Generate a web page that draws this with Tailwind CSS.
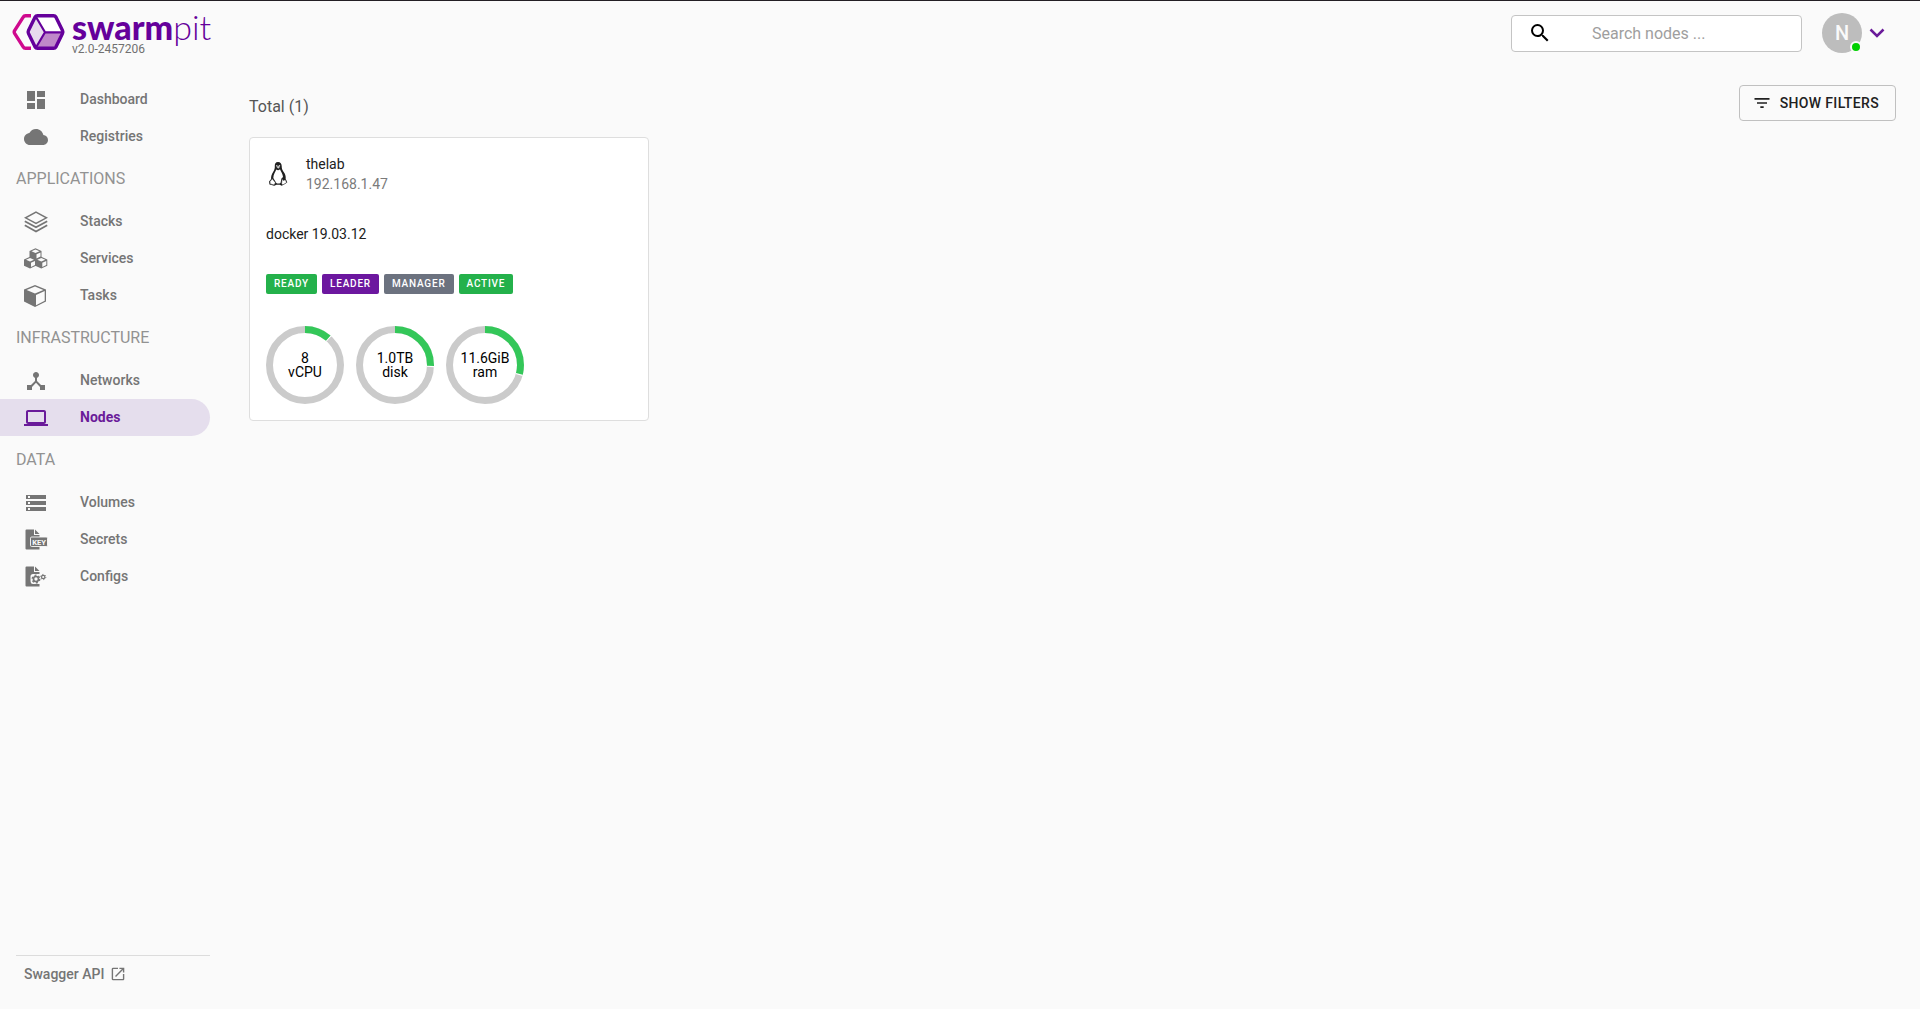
<!DOCTYPE html>
<html lang="en">
<head>
    <meta charset="UTF-8">
    <meta name="viewport" content="width=device-width, initial-scale=1.0">
    <title>Swarmpit - Nodes</title>
    <script src="https://cdn.jsdelivr.net/npm/@tailwindcss/browser@4"></script>
</head>
<body class="min-h-screen flex flex-col bg-[#fafafa] border-t border-[#231f24] font-['Roboto',sans-serif] text-sm text-[#212121]">
    <!-- Top bar -->
    <header class="flex items-center justify-between h-16 pl-3 pr-[35px]">
        <a href="#" class="flex items-start gap-1.5 text-[#65009b]">
            <svg class="w-[54px] h-[38px] mt-1" viewBox="12 13 54 38" fill="none" stroke-linejoin="round">
                <path d="M31 15.7h-5.5q-1.5 0-2.3 1.4L14.6 30.6q-.8 1.4 0 2.8l8.6 13.5q.8 1.4 2.3 1.4H31" stroke="#cf0a8e" stroke-width="3.4"/>
                <path d="M36.500 16.500L45 32 36.500 47.500 28.500 32z" fill="#e8dced"/>
                <path d="M45 32h18L54.500 48h-18z" fill="#bf88c9"/>
                <path d="M36.500 16h18L63 32H45z" fill="#fff"/>
                <path d="M36 17l9 15.300L36 47.500M45 32.300h18" stroke="#65009b" stroke-width="2.200"/>
                <path d="M37.500 15.800h16q1.700 0 2.500 1.400l6.500 13.200q.8 1.600 0 3.200l-6.500 13.200q-.8 1.400-2.500 1.400h-16q-1.700 0-2.500-1.400l-6.500-13.200q-.8-1.600 0-3.200l6.500-13.200q.8-1.400 2.500-1.400z" stroke="#65009b" stroke-width="3.400"/>
            </svg>
            <span class="flex flex-col">
                <span class="font-['Lato',sans-serif] text-[34px] leading-9"><b class="font-black">swarm</b><span class="font-light">pit</span></span>
                <span class="-mt-1 text-xs leading-4 text-[#707070]">v2.0-2457206</span>
            </span>
        </a>
        <div class="flex items-center">
            <label class="flex items-center w-[291px] h-[37px] px-4 bg-white border border-[#c4c4c4] rounded">
                <svg class="w-6 h-6 shrink-0" viewBox="0 0 24 24" fill="#000"><path d="M15.500 14h-.79l-.28-.27A6.471 6.471 0 0016 9.500 6.500 6.500 0 109.500 16c1.610 0 3.090-.59 4.230-1.570l.27.28v.79l5 4.990L20.490 19l-4.990-5zm-6 0C7.010 14 5 11.990 5 9.500S7.010 5 9.500 5 14 7.010 14 9.500 11.990 14 9.500 14z"/></svg>
                <input type="text" placeholder="Search nodes ..." aria-label="Search nodes" class="min-w-0 flex-1 ml-10 pt-0.5 text-base outline-none placeholder:text-[#9e9e9e]">
            </label>
            <button class="flex items-center ml-5" aria-label="Account menu">
                <span class="relative flex items-center justify-center w-10 h-10 rounded-full bg-[#bdbdbd] text-xl font-medium text-[#fafafa]">N
                    <span class="absolute right-0 bottom-0 w-3 h-3 rounded-full border-2 border-[#fafafa] bg-[#00d000]"></span>
                </span>
                <svg class="w-4 h-4 ml-[7px]" viewBox="0 0 16 16" fill="none" stroke="#6a1b9a" stroke-width="2.500"><path d="M1.500 4.500L8 11l6.500-6.500"/></svg>
            </button>
        </div>
    </header>

    <div class="flex flex-1">
        <!-- Sidebar -->
        <aside class="flex flex-col w-[210px] shrink-0 pt-4 font-medium text-[#757575]">
            <nav>
                <a href="#" class="flex items-center h-[37px] pl-6 gap-8"><svg class="w-6 h-6" viewBox="0 0 24 24" fill="currentColor"><path d="M3 13h8V3H3v10zm0 8h8v-6H3v6zm10 0h8V11h-8v10zm0-18v6h8V3h-8z"/></svg><span class="pb-0.5">Dashboard</span></a>
                <a href="#" class="flex items-center h-[37px] pl-6 gap-8"><svg class="w-6 h-6" viewBox="0 0 24 24" fill="currentColor"><path d="M19.350 10.040C18.670 6.590 15.640 4 12 4 9.110 4 6.600 5.640 5.350 8.040 2.340 8.360 0 10.910 0 14c0 3.310 2.690 6 6 6h13c2.760 0 5-2.240 5-5 0-2.640-2.050-4.780-4.650-4.960z"/></svg><span class="pb-0.5">Registries</span></a>

                <h2 class="h-12 pl-4 text-base leading-[48px] font-normal text-[#929292]">APPLICATIONS</h2>
                <a href="#" class="flex items-center h-[37px] pl-6 gap-8">
                    <svg class="w-6 h-6" viewBox="0 0 24 24" fill="none" stroke="currentColor" stroke-width="1.500">
                        <path d="M12 2.200L22.500 7.800 12 13.300 1.500 7.800z"/>
                        <path d="M.8 11.300L12 17.300l11.200-6M.8 15.300L12 21.500l11.200-6.200" stroke-width="1.800"/>
                    </svg><span class="pb-0.5">Stacks</span></a>
                <a href="#" class="flex items-center h-[37px] pl-6 gap-8">
                    <svg class="w-6 h-6" viewBox="0 0 24 24" fill="currentColor">
                        <defs>
                            <g id="cube">
                                <path d="M0 3L6 .2 12 3v6.200L6 12 0 9.200z"/>
                                <path d="M2 3.300L6 1.500l4 1.800-4 1.700zM7 6.300l4-1.700v4L7 10.500z" fill="#fafafa"/>
                            </g>
                        </defs>
                        <use href="#cube" x="5.500" y="1"/>
                        <use href="#cube" x="0" y="9.500"/>
                        <use href="#cube" x="11.300" y="9.500"/>
                    </svg><span class="pb-0.5">Services</span></a>
                <a href="#" class="flex items-center h-[37px] pl-6 gap-8">
                    <svg class="w-6 h-6" viewBox="0 0 24 24" fill="currentColor">
                        <path d="M0 5.500L11 1l11 4.500v12L11 23 0 17.500z"/>
                        <path d="M2.600 5.900L11 2.500l8.400 3.400-8.400 3.600zM12 11l8.700-3.900v9.700L12 21.200z" fill="#fafafa"/>
                    </svg><span class="pb-0.5">Tasks</span></a>

                <h2 class="h-12 pl-4 text-base leading-[48px] font-normal text-[#929292]">INFRASTRUCTURE</h2>
                <a href="#" class="flex items-center h-[37px] pl-6 gap-8"><svg class="w-6 h-6" viewBox="0 0 24 24" fill="currentColor"><path d="M17 16l-4-4V8.820C14.160 8.400 15 7.300 15 6c0-1.660-1.340-3-3-3S9 4.340 9 6c0 1.300.84 2.400 2 2.820V12l-4 4H3v5h5v-3.050l4-4.200 4 4.200V21h5v-5h-4z"/></svg><span class="pb-0.5">Networks</span></a>
                <a href="#" aria-current="page" class="flex items-center h-[37px] pl-6 gap-8 rounded-r-full bg-[#e5deed] font-bold text-[#6a1b9a]"><svg class="w-6 h-6" viewBox="0 0 24 24" fill="currentColor"><path d="M20 18c1.100 0 1.990-.9 1.990-2L22 6c0-1.100-.9-2-2-2H4c-1.100 0-2 .9-2 2v10c0 1.100.9 2 2 2H0v2h24v-2h-4zM4 6h16v10H4V6z"/></svg><span class="pb-0.5">Nodes</span></a>

                <h2 class="h-12 pl-4 text-base leading-[48px] font-normal text-[#929292]">DATA</h2>
                <a href="#" class="flex items-center h-[37px] pl-6 gap-8"><svg class="w-6 h-6" viewBox="0 0 24 24" fill="currentColor"><path d="M2 20h20v-4H2v4zm2-3h2v2H4v-2zM2 4v4h20V4H2zm4 3H4V5h2v2zm-4 7h20v-4H2v4zm2-3h2v2H4v-2z"/></svg><span class="pb-0.5">Volumes</span></a>
                <a href="#" class="flex items-center h-[37px] pl-6 gap-8">
                    <svg class="w-6 h-6" viewBox="0 0 24 24" fill="currentColor">
                        <path d="M2.500 1.500H10V7h5.500v14.500h-13q-1 0-1-1v-18q0-1 1-1z"/>
                        <path d="M11 1.500L15.500 6H11z"/>
                        <rect x="6.500" y="9" width="17" height="9.500" rx="1.200" stroke="#fafafa" stroke-width=".9"/>
                        <text x="15" y="16.500" text-anchor="middle" font-family="Roboto, sans-serif" font-size="7.500" font-weight="700" fill="#fafafa">KEY</text>
                    </svg><span class="pb-0.5">Secrets</span></a>
                <a href="#" class="flex items-center h-[37px] pl-6 gap-8">
                    <svg class="w-6 h-6" viewBox="0 0 24 24" fill="currentColor">
                        <path d="M2.500 1.500H10V7h5.500v2H9q-2.500 0-2.500 2.500v4Q6.500 19 9 19h6.500v2.500h-13q-1 0-1-1v-18q0-1 1-1z"/>
                        <path d="M11 1.500L15.500 6H11z"/>
                        <circle cx="12" cy="14" r="2.500" fill="none" stroke="currentColor" stroke-width="1.700"/>
                        <circle cx="12" cy="14" r="3.800" fill="none" stroke="currentColor" stroke-width="1.300" stroke-dasharray="2 1.980"/>
                        <circle cx="19.200" cy="12" r="1.700" fill="none" stroke="currentColor" stroke-width="1.200"/>
                        <circle cx="19.200" cy="12" r="2.600" fill="none" stroke="currentColor" stroke-width=".9" stroke-dasharray="1.300 1.420"/>
                    </svg><span class="pb-0.5">Configs</span></a>
            </nav>
            <div class="mt-auto ml-4 h-[54px] pt-2 pl-2 border-t border-[#dcdcdc]">
                <a href="#" class="inline-flex items-center gap-[7px]">Swagger API
                    <svg class="w-3.5 h-3.5" viewBox="2 2 20 20" fill="currentColor"><path d="M19 19H5V5h7V3H5a2 2 0 00-2 2v14a2 2 0 002 2h14c1.100 0 2-.9 2-2v-7h-2v7zM14 3v2h3.590l-9.830 9.830 1.410 1.410L19 6.410V10h2V3h-7z"/></svg>
                </a>
            </div>
        </aside>

        <!-- Nodes -->
        <main class="flex-1 pt-5 pl-[39px] pr-6">
            <div class="flex items-start justify-between">
                <h1 class="pt-2 text-base leading-7 text-[#555]">Total (1)</h1>
                <button class="flex items-center gap-2 h-9 pl-3 pr-4 border border-[#c0c0c0] rounded font-medium tracking-wide">
                    <svg class="w-5 h-5" viewBox="0 0 24 24" fill="currentColor"><path d="M10 18h4v-2h-4v2zM3 6v2h18V6H3zm3 7h12v-2H6v2z"/></svg>
                    SHOW FILTERS
                </button>
            </div>

            <article class="w-full max-w-[400px] mt-4 p-4 bg-white border border-[#dedede] rounded">
                <div class="flex items-center gap-4 h-10">
                    <svg class="w-6 h-6" viewBox="0 0 24 24">
                        <path d="M12 0c-2.500 0-3.300 1.900-3.200 4 .1 2.500-.3 3.700-1.700 6-1.500 2.300-2.200 4.500-2 7l-2 2.500.4 3 4.800 1.300 2.200-1h3.200l2 1 3-1.800 2.600-1.700-1.600-3.300c.3-3-.6-5.200-2.200-7.300-1.400-2-1.800-3.300-1.800-5.700C15.700 1.700 14.500 0 12 0z" fill="#202020"/>
                        <path d="M10.300 7.500c-.8 2.300-3 5-3 8.500l3 5q2 1.200 4.200 0l1-4.500 1.500-1.500c-.2-3-2.200-5.400-3-7.700q-1.800 1.700-3.700.2z" fill="#fff"/>
                        <path d="M4 19.500l2.300-2.700 3.200 4-1.500 2.100-3.800-1zM16.200 16.700l1 1.700 2.200-.6 1.200 2.800-3.800 2.300-1.200-1.400z" fill="#fff" stroke="#333" stroke-width=".5"/>
                        <path d="M10.300 4.800l1.800-.8 2 .8-1.800 1.900z" fill="#ccc"/>
                        <circle cx="10.800" cy="3.700" r=".7" fill="#ddd"/>
                        <circle cx="13.400" cy="3.700" r=".8" fill="#ddd"/>
                    </svg>
                    <div class="leading-5">
                        <h2>thelab</h2>
                        <p class="text-[#7b7b7b]">192.168.1.47</p>
                    </div>
                </div>
                <p class="mt-[30px] leading-5">docker 19.03.12</p>
                <div class="flex gap-[5px] mt-[30px] text-[10px] leading-5 font-medium tracking-[0.08em] text-white">
                    <span class="px-2 rounded-xs bg-[#24b14b]">READY</span>
                    <span class="px-2 rounded-xs bg-[#6c179f]">LEADER</span>
                    <span class="px-2 rounded-xs bg-[#6c727f]">MANAGER</span>
                    <span class="px-2 rounded-xs bg-[#24b14b]">ACTIVE</span>
                </div>
                <div class="flex gap-3 mt-8 text-center leading-[14px] text-black">
                    <div class="grid place-items-center w-[78px] h-[78px]">
                        <svg class="col-start-1 row-start-1 w-[78px] h-[78px] -rotate-90" viewBox="0 0 78 78" fill="none" stroke-width="7">
                            <circle cx="39" cy="39" r="35.500" stroke="#cbcbcb"/>
                            <circle cx="39" cy="39" r="35.500" stroke="#fff" pathLength="100" stroke-dasharray="12.200 100" stroke-dashoffset=".4"/>
                            <circle cx="39" cy="39" r="35.500" stroke="#34c759" pathLength="100" stroke-dasharray="11.400 100"/>
                        </svg>
                        <p class="col-start-1 row-start-1">8<br>vCPU</p>
                    </div>
                    <div class="grid place-items-center w-[78px] h-[78px]">
                        <svg class="col-start-1 row-start-1 w-[78px] h-[78px] -rotate-90" viewBox="0 0 78 78" fill="none" stroke-width="7">
                            <circle cx="39" cy="39" r="35.500" stroke="#cbcbcb"/>
                            <circle cx="39" cy="39" r="35.500" stroke="#fff" pathLength="100" stroke-dasharray="26.300 100" stroke-dashoffset=".4"/>
                            <circle cx="39" cy="39" r="35.500" stroke="#34c759" pathLength="100" stroke-dasharray="25.400 100"/>
                        </svg>
                        <p class="col-start-1 row-start-1">1.0TB<br>disk</p>
                    </div>
                    <div class="grid place-items-center w-[78px] h-[78px]">
                        <svg class="col-start-1 row-start-1 w-[78px] h-[78px] -rotate-90" viewBox="0 0 78 78" fill="none" stroke-width="7">
                            <circle cx="39" cy="39" r="35.500" stroke="#cbcbcb"/>
                            <circle cx="39" cy="39" r="35.500" stroke="#fff" pathLength="100" stroke-dasharray="30 100" stroke-dashoffset=".4"/>
                            <circle cx="39" cy="39" r="35.500" stroke="#34c759" pathLength="100" stroke-dasharray="29 100"/>
                        </svg>
                        <p class="col-start-1 row-start-1">11.6GiB<br>ram</p>
                    </div>
                </div>
            </article>
        </main>
    </div>
</body>
</html>
